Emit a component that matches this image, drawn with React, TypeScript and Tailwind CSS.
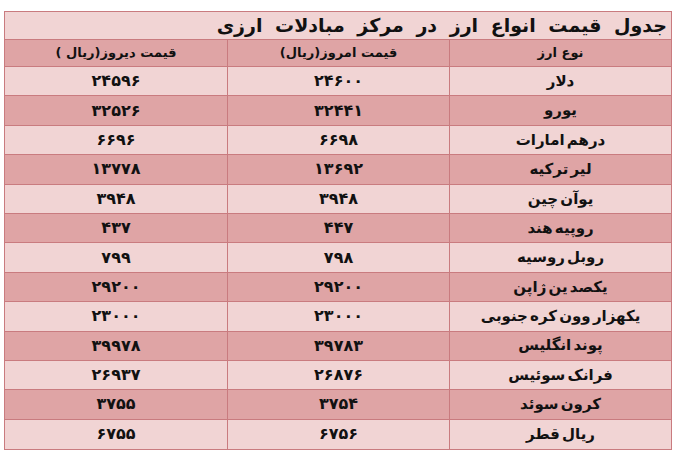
import React from "react";

const rows: [string, string, string][] = [
  ["دلار", "24600", "24596"],
  ["یورو", "32441", "32526"],
  ["درهم امارات", "6698", "6696"],
  ["لیر ترکیه", "13692", "13778"],
  ["یوآن چین", "3948", "3948"],
  ["روپیه هند", "447", "437"],
  ["روبل روسیه", "798", "799"],
  ["یکصد ین ژاپن", "29200", "29200"],
  ["یکهزار وون کره جنوبی", "23000", "23000"],
  ["پوند انگلیس", "39783", "39978"],
  ["فرانک سوئیس", "26876", "26937"],
  ["کرون سوئد", "3754", "3755"],
  ["ریال قطر", "6756", "6755"],
];

const fa = (s: string) => s.replace(/[0-9]/g, (d) => "۰۱۲۳۴۵۶۷۸۹"[Number(d)]);

export default function App() {
  return (
    <div className="w-[677px] h-[461px] bg-white pt-[11px] pl-[4px]" style={{ fontFamily: '"DejaVu Sans", sans-serif' }}>
      <div dir="rtl" className="w-[668px] border border-[#c97b7f] text-[#111] font-bold">
        <div className="h-[28px] bg-[#f1d4d4] border-b border-[#c97b7f] flex items-center pr-[4px] text-[19px] [word-spacing:6px]">
          جدول قیمت انواع ارز در مرکز مبادلات ارزی
        </div>
        <div className="grid grid-cols-[222px_222px_1fr] h-[27px] bg-[#dfa4a5] border-b border-[#c97b7f] text-[13px]">
          <div className="flex items-center justify-center border-l border-[#c97b7f]">نوع ارز</div>
          <div className="flex items-center justify-center border-l border-[#c97b7f]">قیمت امروز(ریال)</div>
          <div className="flex items-center justify-center">قیمت دیروز(ریال )</div>
        </div>
        {rows.map((r, i) => (
          <div
            key={i}
            className={`grid grid-cols-[222px_222px_1fr] h-[29.4px] ${i < rows.length - 1 ? "border-b border-[#c97b7f]" : ""} ${i % 2 === 0 ? "bg-[#f1d4d4]" : "bg-[#dfa4a5]"}`}
          >
            <div className="flex items-center justify-center border-l border-[#c97b7f] text-[15px] [word-spacing:-3px]">{r[0]}</div>
            <div className="flex items-center justify-center border-l border-[#c97b7f] text-[16px] tracking-[0.5px]">{fa(r[1])}</div>
            <div className="flex items-center justify-center text-[16px] tracking-[0.5px]">{fa(r[2])}</div>
          </div>
        ))}
      </div>
    </div>
  );
}
